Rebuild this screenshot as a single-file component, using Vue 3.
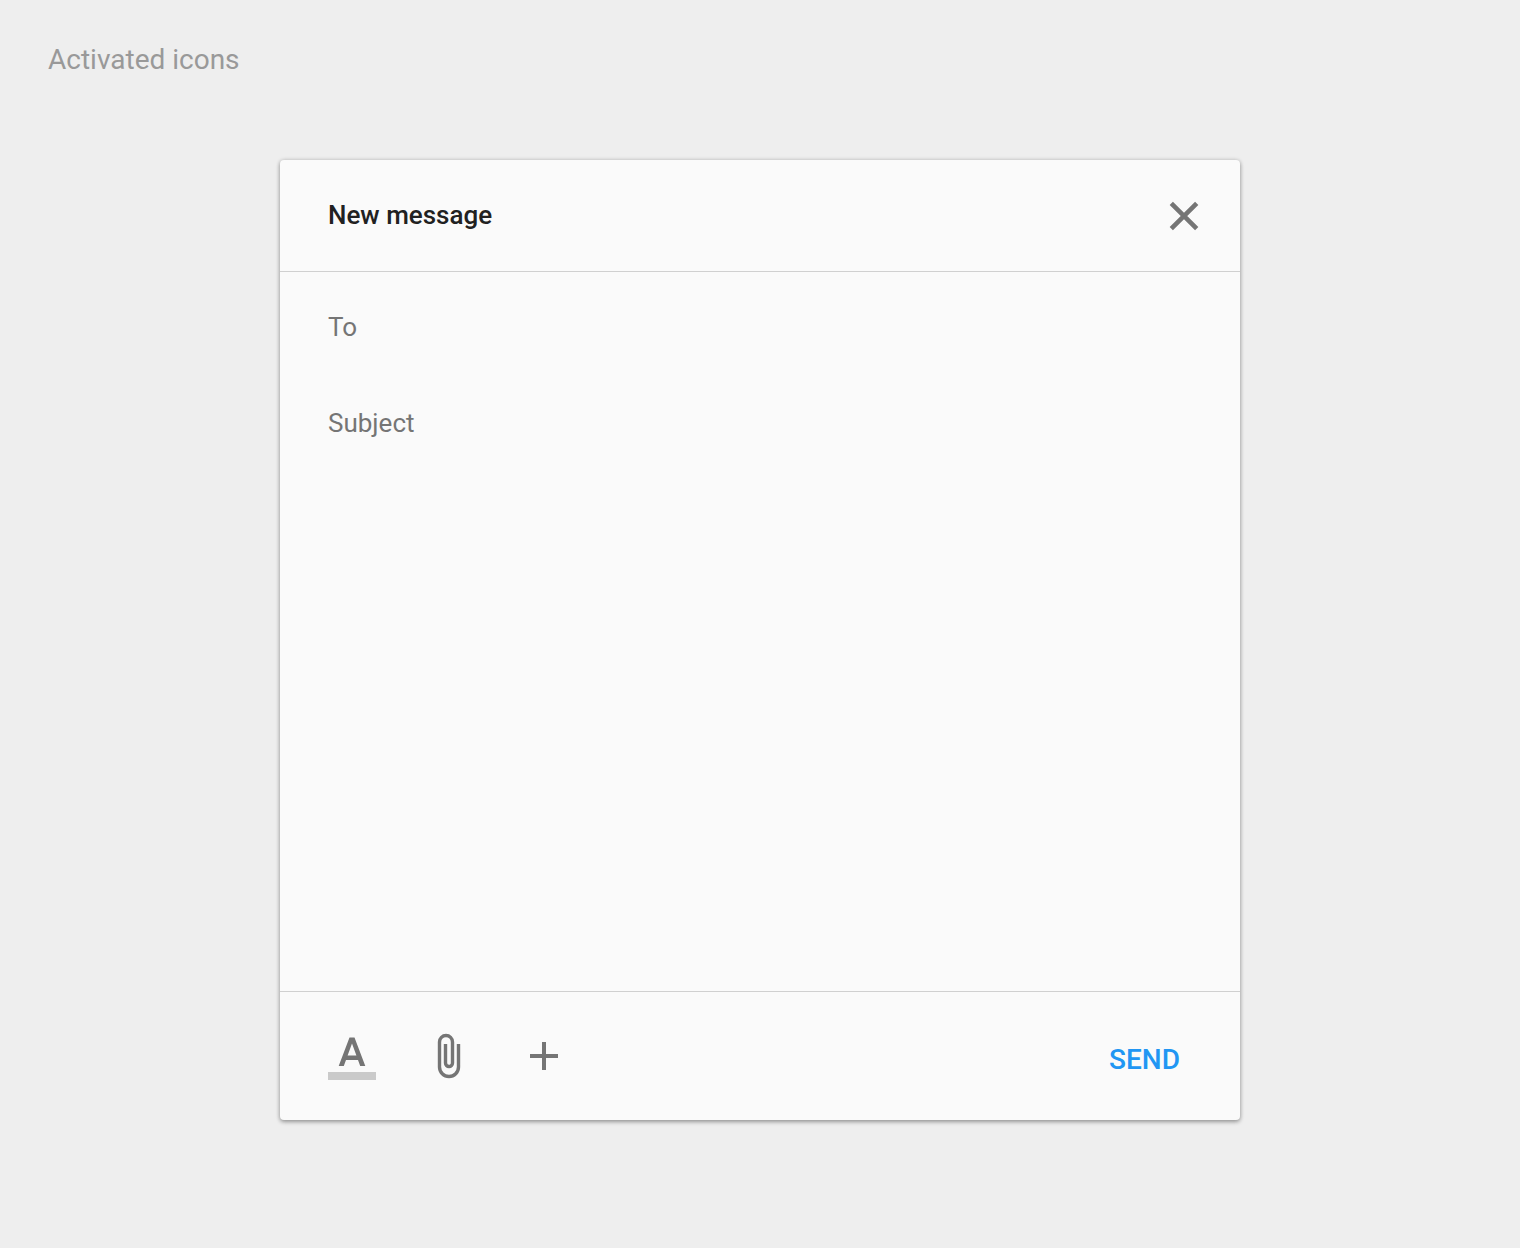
<script setup>
import { ref } from 'vue'

const to = ref('')
const subject = ref('')
const body = ref('')
</script>

<template>
  <main class="page">
    <h1 class="title">Activated icons</h1>
    <form class="dialog" @submit.prevent>
      <header class="bar">
        <h2 class="heading">New message</h2>
        <button class="icon" type="button" aria-label="Close">
          <svg viewBox="0 0 48 48"><path class="line" stroke-width="4.6" d="M11.3 11.3L36.7 36.7M36.7 11.3L11.3 36.7" /></svg>
        </button>
      </header>
      <input v-model="to" class="field" type="text" placeholder="To" aria-label="To" />
      <input v-model="subject" class="field" type="text" placeholder="Subject" aria-label="Subject" />
      <textarea v-model="body" class="body" aria-label="Message"></textarea>
      <footer class="actions">
        <button class="icon" type="button" aria-label="Text color">
          <svg viewBox="0 0 48 48">
            <path class="swatch" d="M0 40h48v8H0z" />
            <path d="M21.5 5.6h5L37.3 34h-5.1l-2.200-6H18l-2.200 6h-5.100zM19.600 23.600h8.800L24 11.600z" />
          </svg>
        </button>
        <button class="icon" type="button" aria-label="Attach file">
          <svg viewBox="0 0 48 48"><path class="line" stroke-width="3.4" d="M34.5 12v23a9.500 9.500 0 0 1-19 0V10a6.500 6.500 0 0 1 13 0v21a3.500 3.500 0 0 1-7 0V12" /></svg>
        </button>
        <button class="icon" type="button" aria-label="Insert">
          <svg viewBox="0 0 48 48"><path d="M38 26H26v12h-4V26H10v-4h12V10h4v12h12z" /></svg>
        </button>
        <button class="send" type="submit">SEND</button>
      </footer>
    </form>
  </main>
</template>

<style>
body {
  background: #eeeeee;
}
</style>

<style scoped>
.page {
  box-sizing: border-box;
  min-height: 100vh;
  padding: 40px 48px 128px;
  display: flex;
  flex-direction: column;
  font-family: Roboto, sans-serif;
}

.title {
  margin: 0 0 80px;
  font-size: 28px;
  line-height: 40px;
  font-weight: 400;
  color: #999999;
}

.dialog {
  box-sizing: border-box;
  width: 100%;
  max-width: 960px;
  margin: 0 auto;
  display: flex;
  flex-direction: column;
  flex: 1;
  background: #fafafa;
  border-radius: 4px;
  box-shadow: 0 0 4px rgba(0, 0, 0, 0.16), 0 2px 4px rgba(0, 0, 0, 0.32);
}

.bar {
  box-sizing: border-box;
  height: 112px;
  padding: 0 32px 0 48px;
  display: flex;
  align-items: center;
  justify-content: space-between;
  border-bottom: 1px solid #d0d0d0;
}

.heading {
  margin: 0;
  padding-bottom: 2px;
  font-size: 26px;
  line-height: 32px;
  font-weight: 500;
  color: #212121;
}

.icon {
  width: 48px;
  height: 48px;
  padding: 0;
  border: 0;
  background: none;
  cursor: pointer;
}

.icon svg {
  display: block;
  width: 48px;
  height: 48px;
  fill: #757575;
}

.icon .line {
  fill: none;
  stroke: #757575;
}

.icon .swatch {
  fill: #cacaca;
}

.field,
.body {
  box-sizing: border-box;
  width: 100%;
  padding: 0 48px;
  border: 0;
  outline: 0;
  background: none;
  font: 400 26px/32px Roboto, sans-serif;
  color: #212121;
}

.field {
  height: 96px;
  padding-top: 14px;
}

.field::placeholder {
  color: #757575;
  opacity: 1;
}

.body {
  flex: 1;
  min-height: 160px;
  padding-top: 32px;
  resize: none;
}

.actions {
  box-sizing: border-box;
  height: 129px;
  padding: 0 48px;
  display: flex;
  align-items: center;
  gap: 48px;
  border-top: 1px solid #d0d0d0;
}

.send {
  height: 72px;
  margin-left: auto;
  padding: 8px 12px 0;
  border: 0;
  background: none;
  font: 500 28px/32px Roboto, sans-serif;
  color: #2196f3;
  cursor: pointer;
}
</style>
